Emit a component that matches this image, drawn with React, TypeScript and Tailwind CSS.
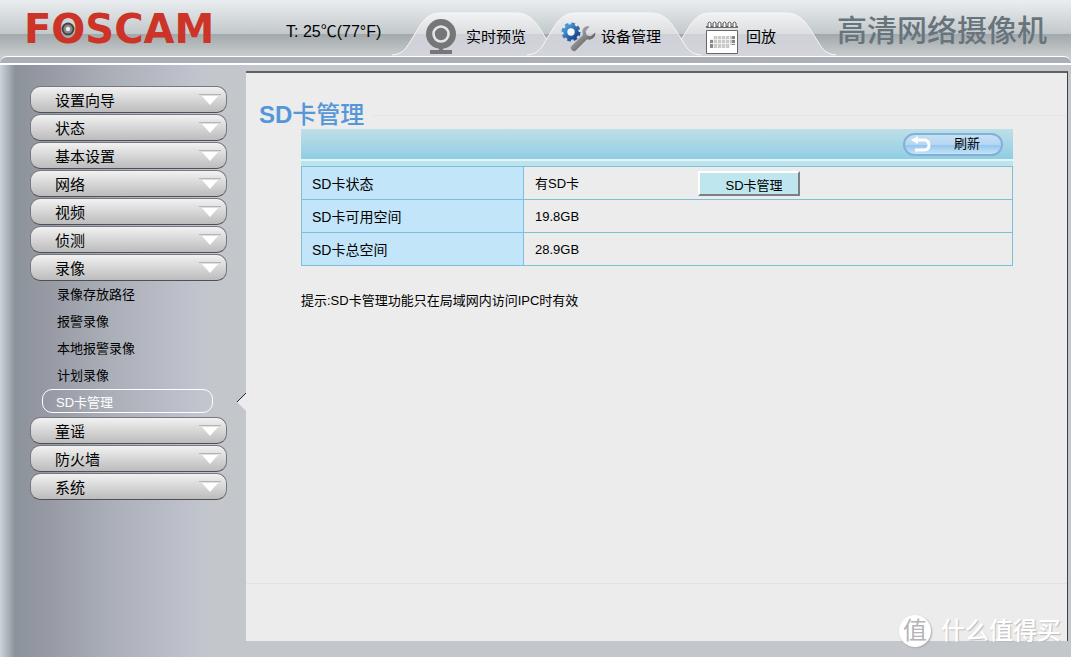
import type { ReactNode } from 'react'

interface INavTab {
    label: string
    icon: ReactNode
    active?: boolean
}

interface IMenuItem {
    label: string
    children?: string[]
}

const menuItems: IMenuItem[] = [
    { label: '设置向导' },
    { label: '状态' },
    { label: '基本设置' },
    { label: '网络' },
    { label: '视频' },
    { label: '侦测' },
    {
        label: '录像',
        children: [
            '录像存放路径',
            '报警录像',
            '本地报警录像',
            '计划录像',
            'SD卡管理',
        ],
    },
    { label: '童谣' },
    { label: '防火墙' },
    { label: '系统' },
]

const sdInfo = [
    { label: 'SD卡状态', value: '有SD卡', manageable: true },
    { label: 'SD卡可用空间', value: '19.8GB' },
    { label: 'SD卡总空间', value: '28.9GB' },
]

function WebcamIcon() {
    return (
        <svg width="30" height="36" viewBox="0 0 30 36" aria-hidden="true">
            <circle cx="15" cy="15" r="15" fill="#757677" />
            <circle
                cx="15"
                cy="15"
                r="7.5"
                fill="#757677"
                stroke="#e6e6e8"
                strokeWidth="2.6"
            />
            <path d="M13 29h4v2h9v4H4v-4h9z" fill="#757677" />
        </svg>
    )
}

function GearWrenchIcon() {
    return (
        <svg width="35" height="30" viewBox="0 0 35 30" aria-hidden="true">
            <defs>
                <linearGradient id="gear" x1="0" y1="0" x2="1" y2="1">
                    <stop offset="0" stopColor="#4fa0d8" />
                    <stop offset="1" stopColor="#173f8c" />
                </linearGradient>
                <linearGradient id="wrench" x1="0" y1="0" x2="1" y2="1">
                    <stop offset="0" stopColor="#c4c4c4" />
                    <stop offset="0.5" stopColor="#858585" />
                    <stop offset="1" stopColor="#3c3c3c" />
                </linearGradient>
            </defs>
            <circle
                cx="10"
                cy="10"
                r="8"
                fill="none"
                stroke="url(#gear)"
                strokeWidth="3"
                strokeDasharray="3.6 2.683"
            />
            <circle
                cx="10"
                cy="10"
                r="5.7"
                fill="#f4f8fc"
                stroke="url(#gear)"
                strokeWidth="4"
            />
            <path
                d="M28.500 4.500c-4-1.500-8 2-7 6.500l.5 2L10 24.500c-1.500 2.500 2 6 4.500 4.200L26 17.300c4.500 1.500 9-2 8.200-6.800l-4.500 3.800-4.200-1-.8-4.300z"
                fill="url(#wrench)"
            />
        </svg>
    )
}

function CalendarIcon() {
    return (
        <svg width="32" height="33" viewBox="0 0 32 33" aria-hidden="true">
            <path d="M0 5h32v2H0z" fill="#6f6f6f" />
            {[2, 7, 12, 17, 22, 27].map((x) => (
                <path
                    key={x}
                    d={`M${x} 6V2q1.500-2 3 0v4`}
                    fill="#fff"
                    stroke="#555"
                    strokeWidth="1"
                />
            ))}
            <path d="M.5 9.500h31v23H.5z" fill="#fff" stroke="#666" />
            <path d="M8 15h21v9h-5v3H4v-9h4z" fill="#c9c9c9" />
            <path d="M4 18h3v9H4zM26 15h3v9h-3z" fill="#888" />
            <path
                d="M7.500 15v12M11.500 15v12M15.500 15v12M19.500 15v12M23.500 15v12M4 18.500h25M4 22.500h25"
                stroke="#eee"
            />
        </svg>
    )
}

const tabs: INavTab[] = [
    { label: '实时预览', icon: <WebcamIcon /> },
    { label: '设备管理', icon: <GearWrenchIcon />, active: true },
    { label: '回放', icon: <CalendarIcon /> },
]

function NavTab({ label, icon, active }: INavTab) {
    return (
        <a
            href="#"
            className={`relative -ml-[39px] flex h-11 w-[174px] items-center pt-1.5 pl-[34px] first:ml-0 last:pl-[44px] ${
                active ? 'z-10' : ''
            }`}
        >
            <svg
                className="absolute inset-0 h-full w-full"
                viewBox="0 0 174 44"
                preserveAspectRatio="none"
                aria-hidden="true"
            >
                <defs>
                    <linearGradient id="tab" x1="0" y1="0" x2="0" y2="1">
                        <stop offset="0" stopColor="#f1f2f3" />
                        <stop offset="0.49" stopColor="#dcdde0" />
                        <stop offset="0.5" stopColor="#cfd0d8" />
                        <stop offset="1" stopColor="#d3d5db" />
                    </linearGradient>
                </defs>
                <path
                    d="M0 44C12 42 14 36 21 25S33 1 48 1H124C140 1 146 14 153 25S162 42 174 44z"
                    fill="url(#tab)"
                />
                <path
                    d="M0 43C12 42 14 36 21 25S33 1 48 1H124C140 1 146 14 153 25S162 42 174 43"
                    fill="none"
                    stroke="#f7f8f8"
                />
            </svg>
            <span className="relative flex w-10 shrink-0">{icon}</span>
            <span className="relative text-[15px] text-black">{label}</span>
        </a>
    )
}

function Header() {
    return (
        <header className="flex h-14 items-end bg-[linear-gradient(#eaeef0_0%,#c3c8ca_60%,#a2a9ac_61%,#c8cccd_100%)]">
            <div className="flex h-full w-[262px] shrink-0 items-center pt-0.5 pl-6 font-['DejaVu_Sans'] text-[40px] leading-none font-bold text-[#cb3426]">
                <span>F</span>
                <span className="relative">
                    O
                    <svg
                        className="absolute inset-0 m-auto"
                        width="14"
                        height="14"
                        viewBox="0 0 14 14"
                        aria-hidden="true"
                    >
                        <circle cx="7" cy="7" r="6.5" fill="#444" />
                        <circle cx="7" cy="7" r="4.5" fill="#888" />
                        <circle cx="7" cy="7" r="2.2" fill="#eee" />
                    </svg>
                </span>
                <span>SCAM</span>
            </div>
            <div className="w-[130px] shrink-0 self-center pt-2 pl-6 text-base whitespace-nowrap">
                T: 25℃(77°F)
            </div>
            <nav className="flex shrink-0">
                {tabs.map((tab) => (
                    <NavTab key={tab.label} {...tab} />
                ))}
            </nav>
            <div className="ml-auto self-center pr-6 pt-1.5 text-[30px] leading-none font-medium whitespace-nowrap text-[#68747c]">
                高清网络摄像机
            </div>
        </header>
    )
}

function MenuButton({ label }: { label: string }) {
    return (
        <button
            type="button"
            className="flex h-[27px] w-full items-center justify-between rounded-[10px] border border-[#77787d] border-b-[#4f5055] bg-linear-to-b from-[#f2f2f2] to-[#bcbcbc] pr-[5px] pl-6 text-[15px] text-black"
        >
            <span className="pt-1">{label}</span>
            <svg width="22" height="12" viewBox="0 0 22 12" aria-hidden="true">
                <path d="M0 .5h22" stroke="#b5b5b5" />
                <path d="M3 2h16l-8 9z" fill="#fff" />
            </svg>
        </button>
    )
}

function Sidebar() {
    return (
        <aside className="w-[246px] shrink-0 pt-[21px] pr-[19px] pl-[30px]">
            <ul className="flex flex-col gap-px">
                {menuItems.map((item) => (
                    <li key={item.label}>
                        <MenuButton label={item.label} />
                        {item.children && (
                            <ul className="pb-[3px]">
                                {item.children.map((child) => (
                                    <li key={child}>
                                        {child === 'SD卡管理' ? (
                                            <a
                                                href="#"
                                                aria-current="page"
                                                className="mr-3.5 ml-3 flex h-6 items-center rounded-[10px] border border-white pl-[13px] pt-1 text-[13px] text-white"
                                            >
                                                {child}
                                            </a>
                                        ) : (
                                            <a
                                                href="#"
                                                className="flex h-[27px] items-center pl-[27px] text-[13px] text-black"
                                            >
                                                {child}
                                            </a>
                                        )}
                                    </li>
                                ))}
                            </ul>
                        )}
                    </li>
                ))}
            </ul>
        </aside>
    )
}

function SdCardTable() {
    return (
        <table className="w-full border-collapse text-black">
            <tbody>
                {sdInfo.map((row) => (
                    <tr key={row.label} className="h-[33px]">
                        <th
                            scope="row"
                            className="w-[222px] border border-[#7cbfda] bg-[#c2e5f9] pt-0.5 pl-2.5 text-left text-sm font-normal"
                        >
                            {row.label}
                        </th>
                        <td className="border border-[#7cbfda] pl-[11px] text-[13px]">
                            <div className="flex items-center">
                                <span className="w-[163px] pt-0.5">
                                    {row.value}
                                </span>
                                {row.manageable && (
                                    <button
                                        type="button"
                                        className="h-[25px] w-[102px] border-2 border-t-white border-r-[#7d7f80] border-b-[#7d7f80] border-l-white bg-[#bde6ef] pt-1 pl-2.5 leading-none"
                                    >
                                        SD卡管理
                                    </button>
                                )}
                            </div>
                        </td>
                    </tr>
                ))}
            </tbody>
        </table>
    )
}

function Watermark() {
    return (
        <div className="absolute right-1.5 -bottom-1.5 flex items-center gap-2.5 text-white">
            <span className="flex size-8 items-center justify-center rounded-full bg-white text-2xl leading-none text-[#b4b4b4] shadow-[1px_1px_2px_#aaa]">
                值
            </span>
            <span className="text-[24px] leading-none font-medium [text-shadow:1px_1px_1px_#bbb]">
                什么值得买
            </span>
        </div>
    )
}

export default function App() {
    return (
        <div className="flex min-h-screen flex-col bg-[#c3c7cc] font-['Liberation_Sans','Noto_Sans_CJK_SC',sans-serif]">
            <Header />
            <div className="bg-[#c8cccd]">
                <div className="h-[7px] rounded-t-lg border-t border-white bg-[#abb0b8]" />
            </div>
            <div className="flex flex-1 border-t-2 border-white bg-[linear-gradient(90deg,#cbd5d8_0px,#8b939a_15px,#9699a3_45px,#a9adb6_105px,#bfc2cc_190px,#c3c7cc_215px)]">
                <Sidebar />
                <main className="relative mt-1.5 mr-[3px] mb-4 flex min-w-0 flex-1 flex-col border-t-2 border-r border-t-[#5f6263] border-r-[#3f4244] bg-[#ececec]">
                    <svg
                        className="absolute top-[319px] -left-[9px]"
                        width="10"
                        height="20"
                        viewBox="0 0 10 20"
                        aria-hidden="true"
                    >
                        <path d="M10 0L0 10l10 10z" fill="#ececec" />
                        <path d="M9 1L0 10" stroke="#222" />
                    </svg>
                    <div className="flex items-center gap-2 pt-[28px] pl-[13px]">
                        <h1 className="text-2xl leading-7 font-bold text-[#5596d8]">
                            SD
                            <span className="font-medium">卡管理</span>
                        </h1>
                        <div className="h-px flex-1 bg-[#e5e5e5]" />
                    </div>
                    <section className="flex-1 pr-[54px] pl-[55px]">
                        <div className="flex h-[30px] items-center justify-end bg-linear-to-b from-[#bfdfe7] to-[#8fcde4] pr-2.5">
                            <button
                                type="button"
                                className="flex h-[23px] w-[100px] items-center rounded-full border-2 border-[#82b1d6] bg-[linear-gradient(#c6e0f4_0%,#b5d6f3_50%,#93c3ec_51%,#c4e4f8_100%)] pl-1.5 text-[13px] text-black"
                            >
                                <svg
                                    width="20"
                                    height="16"
                                    viewBox="0 0 20 16"
                                    fill="none"
                                    aria-hidden="true"
                                >
                                    <path
                                        d="M5 4h8q5 0 5 5t-5 5H4"
                                        stroke="#fff"
                                        strokeWidth="3"
                                    />
                                    <path d="M0 4l7-4v8z" fill="#fff" />
                                </svg>
                                <span className="flex-1 pl-0.5 text-center">
                                    刷新
                                </span>
                            </button>
                        </div>
                        <div className="h-[7px] border-t-2 border-[#e4f5f9] bg-[#bde3ec]" />
                        <SdCardTable />
                        <p className="pt-[25px] text-[13px] leading-5 text-black">
                            提示:SD卡管理功能只在局域网内访问IPC时有效
                        </p>
                    </section>
                    <div className="h-[58px] border-t border-[#e2e2e2]" />
                    <Watermark />
                </main>
            </div>
        </div>
    )
}
